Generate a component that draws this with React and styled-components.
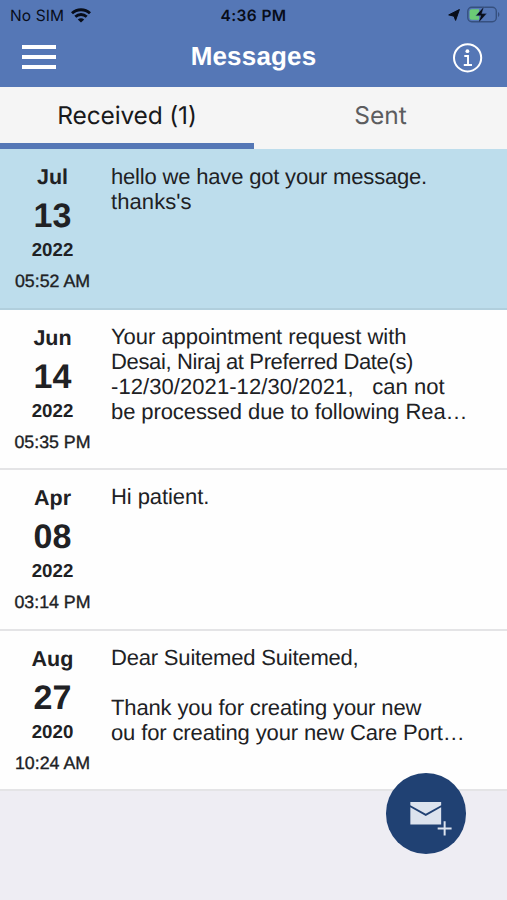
import React from "react";
import styled, { createGlobalStyle } from "styled-components";

const GlobalStyle = createGlobalStyle`
  * { box-sizing: border-box; }
  body { margin: 0; background: #eeedf3; }
`;

const Screen = styled.main`
  position: relative;
  display: flex;
  flex-direction: column;
  width: 507px;
  height: 900px;
  overflow: hidden;
  background: #eeedf3;
  color: #202124;
  font-family: "Liberation Sans", Arial, sans-serif;
  text-rendering: geometricPrecision;
`;

const Header = styled.header`
  height: 87px;
  background: #5577b6;
`;

const StatusBar = styled.div`
  display: grid;
  grid-template-columns: 1fr auto 1fr;
  align-items: center;
  height: 29px;
  padding: 0 7px 0 10px;
  color: #080d19;
  font-family: Inter, sans-serif;
  font-size: 15.5px;
  line-height: 29px;
`;

const Carrier = styled.div`
  display: flex;
  align-items: center;
  gap: 7px;
  letter-spacing: 0.1px;
`;

const Clock = styled.div`
  padding-top: 1px;
  margin-right: 3px;
  font-weight: 600;
  letter-spacing: 0.4px;
`;

const Indicators = styled.div`
  display: flex;
  align-items: center;
  justify-content: flex-end;
  gap: 7px;
`;

const NavBar = styled.div`
  display: grid;
  grid-template-columns: 1fr auto 1fr;
  align-items: center;
  height: 57px;
  padding: 0 24px 0 22px;
`;

const MenuButton = styled.button`
  display: flex;
  flex-direction: column;
  gap: 6px;
  width: 34px;
  margin-top: -2px;
  padding: 0;
  border: 0;
  background: none;
`;

const MenuLine = styled.span`
  height: 4px;
  background: #fff;
`;

const Title = styled.h1`
  margin: -3px 0 0 2px;
  color: #fff;
  font-size: 26px;
  font-weight: 700;
  line-height: 30px;
  letter-spacing: 0.18px;
`;

const InfoButton = styled.button`
  justify-self: end;
  display: flex;
  padding: 0;
  border: 0;
  background: none;
`;

const Tabs = styled.nav`
  display: grid;
  grid-template-columns: 254px 253px;
  height: 62px;
  background: #f5f5f5;
`;

const Tab = styled.button`
  padding: 0 0 1px;
  border: 0;
  border-bottom: 6px solid ${(p) => (p.$active ? "#5577b6" : "transparent")};
  background: none;
  color: ${(p) => (p.$active ? "#18191b" : "#5c5d5f")};
  font-family: Inter, sans-serif;
  font-size: 24.5px;
  line-height: 30px;
  letter-spacing: ${(p) => p.$spacing}px;
  text-rendering: geometricPrecision;
`;

const MessageRow = styled.article`
  display: grid;
  grid-template-columns: 105px 1fr;
  column-gap: 6px;
  height: 160.5px;
  border-bottom: 2px solid ${(p) => (p.$unread ? "#b1cfdd" : "#e4e4e6")};
  background: ${(p) => (p.$unread ? "#bdddec" : "#fefefe")};
`;

const DateColumn = styled.div`
  display: flex;
  flex-direction: column;
  align-items: center;
  padding-top: 15px;
  font-weight: 700;
  white-space: nowrap;
`;

const Month = styled.span`
  font-size: 21.5px;
  line-height: 26px;
`;

const Day = styled.span`
  font-size: 34px;
  line-height: 53px;
`;

const Year = styled.span`
  font-size: 18.7px;
  line-height: 14px;
`;

const Time = styled.span`
  margin-top: 14px;
  font-size: 17.8px;
  font-weight: 400;
  line-height: 20px;
  -webkit-text-stroke: 0.35px currentColor;
`;

const Body = styled.div`
  padding-top: ${(p) => (p.$unread ? 15 : 14)}px;
  font-size: 22px;
  line-height: 25px;
`;

const BodyLine = styled.div`
  height: 25px;
  white-space: pre;
  letter-spacing: ${(p) => p.$spacing}px;
`;

const ComposeButton = styled.button`
  position: absolute;
  right: 41px;
  bottom: 46.5px;
  display: flex;
  width: 80.5px;
  height: 80.5px;
  padding: 0;
  border: 0;
  border-radius: 50%;
  background: #204173;
`;

const messages = [
  {
    month: "Jul", day: "13", year: "2022", time: "05:52 AM", unread: true,
    lines: [["hello we have got your message.", -0.18], ["thanks's", 0.08]],
  },
  {
    month: "Jun", day: "14", year: "2022", time: "05:35 PM",
    lines: [
      ["Your appointment request with", -0.03],
      ["Desai, Niraj at Preferred Date(s)", -0.37],
      ["-12/30/2021-12/30/2021,   can not", 0.07],
      ["be processed due to following Rea…", -0.09],
    ],
  },
  {
    month: "Apr", day: "08", year: "2022", time: "03:14 PM",
    lines: [["Hi patient.", -0.07]],
  },
  {
    month: "Aug", day: "27", year: "2020", time: "10:24 AM",
    lines: [
      ["Dear Suitemed Suitemed,", -0.19],
      ["", 0],
      ["Thank you for creating your new", -0.13],
      ["ou for creating your new Care Port…", -0.13],
    ],
  },
];

function WifiIcon() {
  return (
    <svg width="20" height="15" viewBox="0 0 20 15" fill="none" stroke="#080d19" strokeWidth="2.9">
      <path d="M1 5.2C6 .5 14 .5 19 5.2" />
      <path d="M4.3 8.7c3.3-3 8.1-3 11.4 0" />
      <path d="M10 14.6 6.8 11.4c1.8-1.6 4.6-1.6 6.4 0Z" fill="#080d19" stroke="none" />
    </svg>
  );
}

function LocationIcon() {
  return (
    <svg width="12" height="12" viewBox="0 0 12 12">
      <path d="M11.4.5 7.6 11.4 6 7.2.7 5.9Z" fill="#080d19" stroke="#080d19" strokeWidth="1" strokeLinejoin="round" />
    </svg>
  );
}

function BatteryIcon() {
  return (
    <svg width="33" height="18" viewBox="0 0 33 18">
      <rect x=".8" y="1.3" width="28.5" height="14.4" rx="4" fill="none" stroke="#36507f" strokeWidth="1.4" />
      <path d="M4.8 3.2H12v10.6H4.8Q2.6 13.8 2.6 11.5V5.5Q2.6 3.2 4.8 3.2Z" fill="#6bcb75" />
      <path d="M31 6c1.8.8 1.8 4.2 0 5Z" fill="#36507f" />
      <path d="m17 .4-8.2 9.3h5l-2.5 7.4 8.5-9.5h-5Z" fill="#080d19" stroke="#5577b6" strokeWidth=".4" />
    </svg>
  );
}

function InfoIcon() {
  return (
    <svg width="30" height="30" viewBox="0 0 30 30" fill="none" stroke="#fff">
      <circle cx="14.6" cy="14.8" r="13.6" strokeWidth="2" />
      <circle cx="14.4" cy="8.2" r="1.9" fill="#fff" stroke="none" />
      <path d="M11.3 13h3.7v9M10.8 22h8.2" strokeWidth="1.9" />
    </svg>
  );
}

function ComposeIcon() {
  return (
    <svg width="81" height="81" viewBox="0 0 81 81">
      <path d="M24.5 29H55.5v3.1L40 40.7l-15.5-8.6Z" fill="#dce3ee" />
      <path d="M24.5 34.3 40 43l15.5-8.7v17.2h-31Z" fill="#dce3ee" />
      <path d="M59 48v15M51.5 55.5h15" fill="none" stroke="#204173" strokeWidth="5" />
      <path d="M59 48.3v14.4M52 55.5h14" fill="none" stroke="#dce3ee" strokeWidth="2" />
    </svg>
  );
}

export default function App() {
  return (
    <Screen>
      <GlobalStyle />
      <Header>
        <StatusBar>
          <Carrier>No SIM <WifiIcon /></Carrier>
          <Clock>4:36 PM</Clock>
          <Indicators><LocationIcon /><BatteryIcon /></Indicators>
        </StatusBar>
        <NavBar>
          <MenuButton aria-label="Menu"><MenuLine /><MenuLine /><MenuLine /></MenuButton>
          <Title>Messages</Title>
          <InfoButton aria-label="Information"><InfoIcon /></InfoButton>
        </NavBar>
      </Header>
      <Tabs>
        <Tab $active $spacing={-0.15}>Received (1)</Tab>
        <Tab $spacing={0}>Sent</Tab>
      </Tabs>
      {messages.map((m) => (
        <MessageRow key={m.month} $unread={m.unread}>
          <DateColumn>
            <Month>{m.month}</Month>
            <Day>{m.day}</Day>
            <Year>{m.year}</Year>
            <Time>{m.time}</Time>
          </DateColumn>
          <Body $unread={m.unread}>
            {m.lines.map(([text, spacing], i) => (
              <BodyLine key={i} $spacing={spacing}>{text}</BodyLine>
            ))}
          </Body>
        </MessageRow>
      ))}
      <ComposeButton aria-label="New message"><ComposeIcon /></ComposeButton>
    </Screen>
  );
}
